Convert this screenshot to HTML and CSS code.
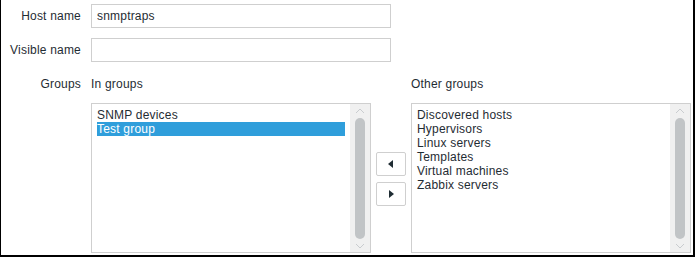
FILE: index.html
```html
<!DOCTYPE html>
<html lang="en">

<head>
    <meta charset="UTF-8">
    <title>Host</title>
    <link rel="stylesheet" href="styles.css">
</head>

<body>
    <form class="host-form">
        <div class="form-row">
            <label class="form-label" for="hostName">Host name</label>
            <input class="text-input" type="text" id="hostName" value="snmptraps">
        </div>
        <div class="form-row">
            <label class="form-label" for="visibleName">Visible name</label>
            <input class="text-input" type="text" id="visibleName">
        </div>
        <div class="form-row groups-row">
            <div class="form-label">Groups</div>
            <div class="groups">
                <div class="groups-title">In groups</div>
                <div></div>
                <div class="groups-title">Other groups</div>

                <div class="listbox">
                    <ul class="list-items">
                        <li>SNMP devices</li>
                        <li class="selected">Test group</li>
                    </ul>
                    <div class="scrollbar">
                        <div class="scroll-arrow">
                            <svg width="10" height="6" viewBox="0 0 10 6"><path d="M1 5 L5 1 L9 5" fill="none" stroke="#c9cccf" stroke-width="1"/></svg>
                        </div>
                        <div class="scroll-thumb"></div>
                        <div class="scroll-arrow">
                            <svg width="10" height="6" viewBox="0 0 10 6"><path d="M1 1 L5 5 L9 1" fill="none" stroke="#c9cccf" stroke-width="1"/></svg>
                        </div>
                    </div>
                </div>

                <div class="move-buttons">
                    <button type="button" class="move-btn">
                        <svg width="6" height="8" viewBox="0 0 6 8"><path d="M5 0 L5 8 L0 4 Z" fill="#1f2c33"/></svg>
                    </button>
                    <button type="button" class="move-btn">
                        <svg width="6" height="8" viewBox="0 0 6 8"><path d="M1 0 L1 8 L6 4 Z" fill="#1f2c33"/></svg>
                    </button>
                </div>

                <div class="listbox">
                    <ul class="list-items">
                        <li>Discovered hosts</li>
                        <li>Hypervisors</li>
                        <li>Linux servers</li>
                        <li>Templates</li>
                        <li>Virtual machines</li>
                        <li>Zabbix servers</li>
                    </ul>
                    <div class="scrollbar">
                        <div class="scroll-arrow">
                            <svg width="10" height="6" viewBox="0 0 10 6"><path d="M1 5 L5 1 L9 5" fill="none" stroke="#c9cccf" stroke-width="1"/></svg>
                        </div>
                        <div class="scroll-thumb"></div>
                        <div class="scroll-arrow">
                            <svg width="10" height="6" viewBox="0 0 10 6"><path d="M1 1 L5 5 L9 1" fill="none" stroke="#c9cccf" stroke-width="1"/></svg>
                        </div>
                    </div>
                </div>
            </div>
        </div>
    </form>
</body>

</html>
```

FILE: styles.css
```css
* {
    box-sizing: border-box;
}

body {
    margin: 0;
    width: 695px;
    height: 257px;
    background-color: #fff;
    border-left: 1px solid #000;
    border-right: 2px solid #000;
    border-bottom: 2px solid #000;
    font-family: "Liberation Sans", Arial, sans-serif;
    font-size: 12px;
    letter-spacing: 0.2px;
    color: #1f2c33;
    overflow: hidden;
}

.host-form {
    padding-top: 4px;
}

.form-row {
    display: flex;
    align-items: center;
    gap: 10px;
    margin-bottom: 10px;
}

.form-label {
    width: 80px;
    text-align: right;
    line-height: 14px;
}

.text-input {
    width: 300px;
    height: 24px;
    margin: 0;
    padding: 0 5px;
    border: 1px solid #cfcfcf;
    border-radius: 0;
    font-family: inherit;
    font-size: 12px;
    letter-spacing: 0.2px;
    color: #1f2c33;
    outline: none;
}

.groups-row {
    align-items: flex-start;
    margin-top: 15px;
}

.groups {
    display: grid;
    grid-template-columns: 280px 30px 280px;
    column-gap: 5px;
    row-gap: 12px;
}

.groups-title {
    line-height: 14px;
}

.listbox {
    display: flex;
    height: 150px;
    border: 1px solid #cfcfcf;
}

.list-items {
    flex: 1;
    list-style: none;
    margin: 0 5px 0 5px;
    padding: 4px 0 0 0;
}

.list-items li {
    height: 14px;
    line-height: 14px;
    white-space: nowrap;
}

.list-items li.selected {
    background-color: #2f9edb;
    color: #fff;
}

.scrollbar {
    width: 20px;
    display: flex;
    flex-direction: column;
    background-color: #f0f0f0;
}

.scroll-arrow {
    height: 14px;
    display: flex;
    align-items: center;
    justify-content: center;
}

.scroll-arrow:last-child {
    height: 13px;
}

.scroll-thumb {
    flex: 1;
    margin: 0 5px;
    background-color: #c1c4c6;
    border-radius: 5px;
}

.move-buttons {
    display: flex;
    flex-direction: column;
    justify-content: center;
    gap: 6px;
    padding-top: 2px;
}

.move-btn {
    width: 30px;
    height: 24px;
    margin: 0;
    padding: 0;
    display: flex;
    align-items: center;
    justify-content: center;
    background-color: #fff;
    border: 1px solid #cfcfcf;
    border-radius: 2px;
}
```
